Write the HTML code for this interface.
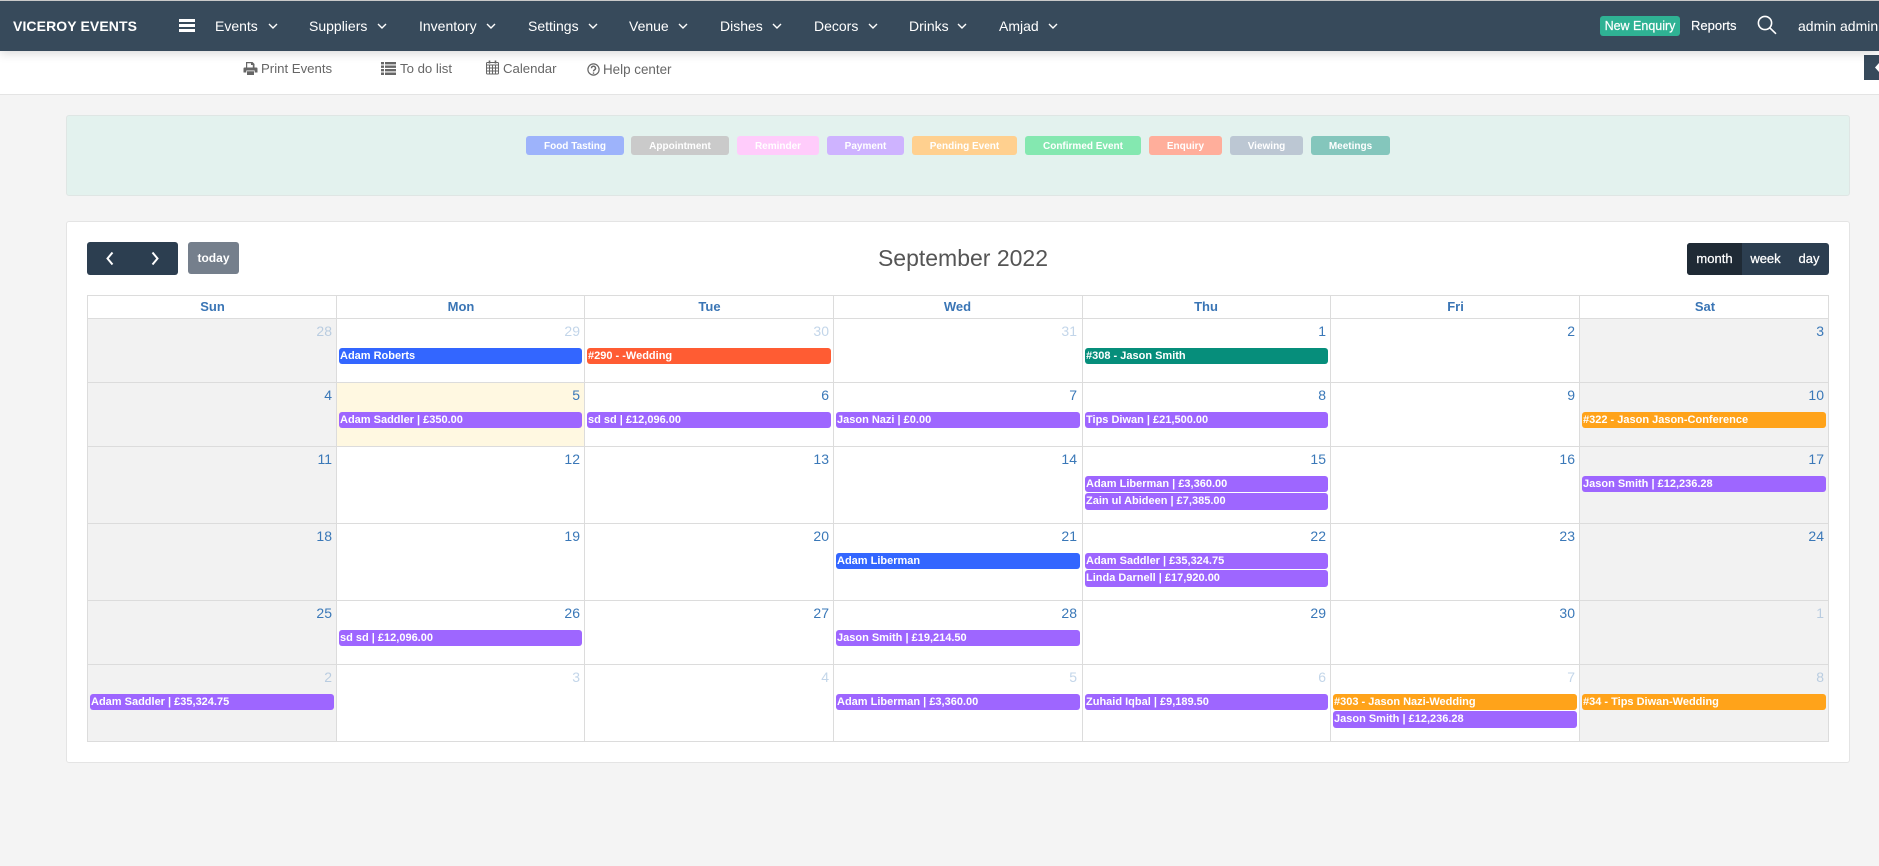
<!DOCTYPE html>
<html lang="en">
<head>
<meta charset="utf-8">
<title>Viceroy Events</title>
<style>
html,body{margin:0;padding:0}
body{width:1879px;height:866px;overflow:hidden;background:#f4f4f4;font-family:"Liberation Sans",Arial,sans-serif;position:relative}
div,span,svg,a{position:absolute;box-sizing:border-box;white-space:nowrap}
#top{left:0;top:0;width:1879px;height:51px;background:#374a5b;border-top:1px solid #c9c9c9;box-shadow:0 2px 10px rgba(0,0,0,.16);z-index:3}
.n{top:16px;height:20px;line-height:20px;font-size:14px;color:#fff}
.sub{left:0;top:51px;width:1879px;height:44px;background:#fff;border-bottom:1px solid #e4e4e4}
.s{height:18px;line-height:18px;font-size:13.2px;color:#666}
.panel{left:66px;top:115px;width:1784px;height:81px;background:#e3f2ee;border:1px solid #dfe6e4;border-radius:3px}
.tag{top:136px;height:19px;line-height:21px;border-radius:3px;font-size:10px;font-weight:bold;color:#fff;text-align:center}
.card{left:66px;top:221px;width:1784px;height:542px;background:#fff;border:1px solid #e4e4e4;border-radius:3px}
.btn{color:#fff;text-align:center;font-size:13px;-webkit-text-stroke:.25px #fff}
.h{top:296px;height:22px;line-height:22px;text-align:center;font-size:13px;font-weight:bold;color:#3a75b5}
.hl{background:#dcdcdc;height:1px;left:87px;width:1742px}
.vl{background:#dcdcdc;width:1px;top:295px;height:447px}
.bg{background:#f2f2f2}
.d{height:16px;line-height:16px;width:40px;text-align:right;font-size:14px;color:#3a78b8}
.o{opacity:.3}
.e{height:16px;line-height:17px;border-radius:3px;font-size:11px;font-weight:bold;color:#fff;padding-left:1px;overflow:hidden}
.p{background:#9e66ff}.b{background:#3366ff}.r{background:#ff5c33}.t{background:#068e7b}.y{background:#ffa31a}
</style>
</head>
<body>
<div id="top">
  <div class="n" style="left:13px;top:15px;font-weight:bold;font-size:14px;letter-spacing:.1px">VICEROY EVENTS</div>
  <div style="left:179px;top:18px;width:16px;height:3px;background:#fff"></div>
  <div style="left:179px;top:23px;width:16px;height:3px;background:#fff"></div>
  <div style="left:179px;top:28px;width:16px;height:3px;background:#fff"></div>
  <div class="n" style="left:215px;top:15px">Events</div>
  <div class="n" style="left:309px;top:15px">Suppliers</div>
  <div class="n" style="left:419px;top:15px">Inventory</div>
  <div class="n" style="left:528px;top:15px">Settings</div>
  <div class="n" style="left:629px;top:15px">Venue</div>
  <div class="n" style="left:720px;top:15px">Dishes</div>
  <div class="n" style="left:814px;top:15px">Decors</div>
  <div class="n" style="left:909px;top:15px">Drinks</div>
  <div class="n" style="left:999px;top:15px">Amjad</div>
  <svg style="left:0;top:-1px" width="1100" height="51" fill="none" stroke="#fff" stroke-width="1.4">
    <path d="M269 24l4 4 4-4M378 24l4 4 4-4M487 24l4 4 4-4M589 24l4 4 4-4M679 24l4 4 4-4M773 24l4 4 4-4M869 24l4 4 4-4M958 24l4 4 4-4M1049 24l4 4 4-4"/>
  </svg>
  <div style="left:1600px;top:15px;width:80px;height:20px;line-height:20px;background:#2fb294;border-radius:3px;color:#fff;font-size:12.5px;-webkit-text-stroke:.2px #fff;text-align:center">New Enquiry</div>
  <div class="n" style="left:1691px;top:15px;font-size:13px;-webkit-text-stroke:.15px #fff">Reports</div>
  <svg style="left:1756px;top:13px" width="24" height="22" fill="none" stroke="#fff" stroke-width="1.6">
    <circle cx="9" cy="9" r="6.6"/><path d="M13.8 13.8l6.2 6"/>
  </svg>
  <div class="n" style="left:1798px;top:15px">admin admin</div>
</div>
<div class="sub"></div>
<div style="left:1864px;top:55px;width:15px;height:25px;background:#374a5b;z-index:2"></div>
<svg style="left:1874px;top:60px;z-index:2" width="5" height="15"><path d="M5 3L1 7.5 5 12z" fill="#fff"/></svg>

<svg style="left:243px;top:61px" width="15" height="15" fill="#666"><path d="M3 1h6.500l2 2v3.500H9.800V4H8V2.200H4.200V6.500H3zM1.500 6.500h12a1 1 0 0 1 1 1V11.500h-2.800v-2H3.300v2H.5V7.500a1 1 0 0 1 1-1zM4 10.200h7V14H4z"/></svg>
<div class="s" style="left:261px;top:60px">Print Events</div>
<svg style="left:381px;top:61px" width="15" height="14" fill="#666"><path d="M0 1h3v2.400H0zM4 1h11v2.400H4zM0 4.500h3v2.400H0zM4 4.500h11v2.400H4zM0 8h3v2.400H0zM4 8h11v2.400H4zM0 11.500h3V14H0zM4 11.500h11V14H4z"/></svg>
<div class="s" style="left:400px;top:60px">To do list</div>
<svg style="left:486px;top:60px" width="14" height="15" fill="none" stroke="#666"><rect x=".5" y="2.500" width="12" height="11.500" rx="1"/><path d="M.5 5h12M.5 8h12M.5 11h12M3.500 5v9M6.500 5v9M9.500 5v9"/><path d="M3.500 .5v3M9.500 .5v3" stroke-width="1.600"/></svg>
<div class="s" style="left:503px;top:60px">Calendar</div>
<svg style="left:587px;top:63px" width="13" height="13" fill="none" stroke="#666" stroke-width="1.200"><circle cx="6.500" cy="6.500" r="5.600"/><path d="M4.500 5.200a2 2 0 1 1 3 1.700c-.7.400-1 .8-1 1.500" stroke-width="1.400"/><path d="M6.500 9.400v1.400" stroke-width="1.400"/></svg>
<div class="s" style="left:603px;top:61px;font-size:13.4px">Help center</div>

<div class="panel"></div>
<div class="tag" style="left:526px;width:98px;background:#9db3fb">Food Tasting</div>
<div class="tag" style="left:631px;width:98px;background:#cacaca">Appointment</div>
<div class="tag" style="left:737px;width:82px;background:#ffccfb">Reminder</div>
<div class="tag" style="left:827px;width:77px;background:#ceb3ff">Payment</div>
<div class="tag" style="left:912px;width:105px;background:#ffd08f">Pending Event</div>
<div class="tag" style="left:1025px;width:116px;background:#84e8b0">Confirmed Event</div>
<div class="tag" style="left:1149px;width:73px;background:#ffae9b">Enquiry</div>
<div class="tag" style="left:1230px;width:73px;background:#bcc7d3">Viewing</div>
<div class="tag" style="left:1311px;width:79px;background:#84c6bc">Meetings</div>

<div class="card"></div>
<div style="left:87px;top:242px;width:91px;height:33px;background:#2c3e50;border-radius:3px"></div>
<svg style="left:87px;top:242px" width="91" height="33" fill="none" stroke="#fff" stroke-width="2"><path d="M25.500 10.500l-5 6 5 6M65.500 10.500l5 6-5 6"/></svg>
<div style="left:188px;top:242px;width:51px;height:32px;line-height:33px;background:#757f8c;border-radius:3px;color:#fff;text-align:center;font-size:12px;font-weight:bold">today</div>
<div style="left:760px;top:243px;width:406px;height:30px;line-height:30px;text-align:center;font-size:23px;color:#555">September 2022</div>
<div style="left:1687px;top:243px;width:142px;height:32px;background:#2c3e50;border-radius:3px"></div>
<div class="btn" style="left:1687px;top:243px;width:55px;height:32px;line-height:32px;background:#1f2a35;border-radius:3px 0 0 3px">month</div>
<div class="btn" style="left:1742px;top:243px;width:47px;height:32px;line-height:32px">week</div>
<div class="btn" style="left:1790px;top:243px;width:38px;height:32px;line-height:32px">day</div>

<div class="h" style="left:88px;width:249px">Sun</div>
<div class="h" style="left:337px;width:248px">Mon</div>
<div class="h" style="left:585px;width:249px">Tue</div>
<div class="h" style="left:833px;width:249px">Wed</div>
<div class="h" style="left:1082px;width:248px">Thu</div>
<div class="h" style="left:1331px;width:249px">Fri</div>
<div class="h" style="left:1580px;width:250px">Sat</div>

<div class="bg" style="left:87px;top:318px;width:249px;height:423px"></div>
<div class="bg" style="left:1579px;top:318px;width:250px;height:423px"></div>
<div style="left:336px;top:382px;width:248px;height:64px;background:#fff8e1"></div>

<div class="hl" style="top:295px"></div><div class="hl" style="top:318px"></div><div class="hl" style="top:382px"></div><div class="hl" style="top:446px"></div><div class="hl" style="top:523px"></div><div class="hl" style="top:600px"></div><div class="hl" style="top:664px"></div><div class="hl" style="top:741px"></div>
<div class="vl" style="left:87px"></div><div class="vl" style="left:336px"></div><div class="vl" style="left:584px"></div><div class="vl" style="left:833px"></div><div class="vl" style="left:1082px"></div><div class="vl" style="left:1330px"></div><div class="vl" style="left:1579px"></div><div class="vl" style="left:1828px"></div>

<!-- row 1 -->
<div class="d o" style="left:292px;top:323px">28</div><div class="d o" style="left:540px;top:323px">29</div><div class="d o" style="left:789px;top:323px">30</div><div class="d o" style="left:1037px;top:323px">31</div><div class="d" style="left:1286px;top:323px">1</div><div class="d" style="left:1535px;top:323px">2</div><div class="d" style="left:1784px;top:323px">3</div>
<!-- row 2 -->
<div class="d" style="left:292px;top:387px">4</div><div class="d" style="left:540px;top:387px">5</div><div class="d" style="left:789px;top:387px">6</div><div class="d" style="left:1037px;top:387px">7</div><div class="d" style="left:1286px;top:387px">8</div><div class="d" style="left:1535px;top:387px">9</div><div class="d" style="left:1784px;top:387px">10</div>
<!-- row 3 -->
<div class="d" style="left:292px;top:451px">11</div><div class="d" style="left:540px;top:451px">12</div><div class="d" style="left:789px;top:451px">13</div><div class="d" style="left:1037px;top:451px">14</div><div class="d" style="left:1286px;top:451px">15</div><div class="d" style="left:1535px;top:451px">16</div><div class="d" style="left:1784px;top:451px">17</div>
<!-- row 4 -->
<div class="d" style="left:292px;top:528px">18</div><div class="d" style="left:540px;top:528px">19</div><div class="d" style="left:789px;top:528px">20</div><div class="d" style="left:1037px;top:528px">21</div><div class="d" style="left:1286px;top:528px">22</div><div class="d" style="left:1535px;top:528px">23</div><div class="d" style="left:1784px;top:528px">24</div>
<!-- row 5 -->
<div class="d" style="left:292px;top:605px">25</div><div class="d" style="left:540px;top:605px">26</div><div class="d" style="left:789px;top:605px">27</div><div class="d" style="left:1037px;top:605px">28</div><div class="d" style="left:1286px;top:605px">29</div><div class="d" style="left:1535px;top:605px">30</div><div class="d o" style="left:1784px;top:605px">1</div>
<!-- row 6 -->
<div class="d o" style="left:292px;top:669px">2</div><div class="d o" style="left:540px;top:669px">3</div><div class="d o" style="left:789px;top:669px">4</div><div class="d o" style="left:1037px;top:669px">5</div><div class="d o" style="left:1286px;top:669px">6</div><div class="d o" style="left:1535px;top:669px">7</div><div class="d o" style="left:1784px;top:669px">8</div>

<!-- events -->
<div class="e b" style="left:339px;top:348px;width:243px">Adam Roberts</div>
<div class="e r" style="left:587px;top:348px;width:244px">#290 - -Wedding</div>
<div class="e t" style="left:1085px;top:348px;width:243px">#308 - Jason Smith</div>

<div class="e p" style="left:339px;top:412px;width:243px">Adam Saddler | £350.00</div>
<div class="e p" style="left:587px;top:412px;width:244px">sd sd | £12,096.00</div>
<div class="e p" style="left:836px;top:412px;width:244px">Jason Nazi | £0.00</div>
<div class="e p" style="left:1085px;top:412px;width:243px">Tips Diwan | £21,500.00</div>
<div class="e y" style="left:1582px;top:412px;width:244px">#322 - Jason Jason-Conference</div>

<div class="e p" style="left:1085px;top:476px;width:243px">Adam Liberman | £3,360.00</div>
<div class="e p" style="left:1085px;top:493px;width:243px;height:17px">Zain ul Abideen | £7,385.00</div>
<div class="e p" style="left:1582px;top:476px;width:244px">Jason Smith | £12,236.28</div>

<div class="e b" style="left:836px;top:553px;width:244px">Adam Liberman</div>
<div class="e p" style="left:1085px;top:553px;width:243px">Adam Saddler | £35,324.75</div>
<div class="e p" style="left:1085px;top:570px;width:243px;height:17px">Linda Darnell | £17,920.00</div>

<div class="e p" style="left:339px;top:630px;width:243px">sd sd | £12,096.00</div>
<div class="e p" style="left:836px;top:630px;width:244px">Jason Smith | £19,214.50</div>

<div class="e p" style="left:90px;top:694px;width:244px">Adam Saddler | £35,324.75</div>
<div class="e p" style="left:836px;top:694px;width:244px">Adam Liberman | £3,360.00</div>
<div class="e p" style="left:1085px;top:694px;width:243px">Zuhaid Iqbal | £9,189.50</div>
<div class="e y" style="left:1333px;top:694px;width:244px">#303 - Jason Nazi-Wedding</div>
<div class="e p" style="left:1333px;top:711px;width:244px;height:17px">Jason Smith | £12,236.28</div>
<div class="e y" style="left:1582px;top:694px;width:244px">#34 - Tips Diwan-Wedding</div>
</body>
</html>
